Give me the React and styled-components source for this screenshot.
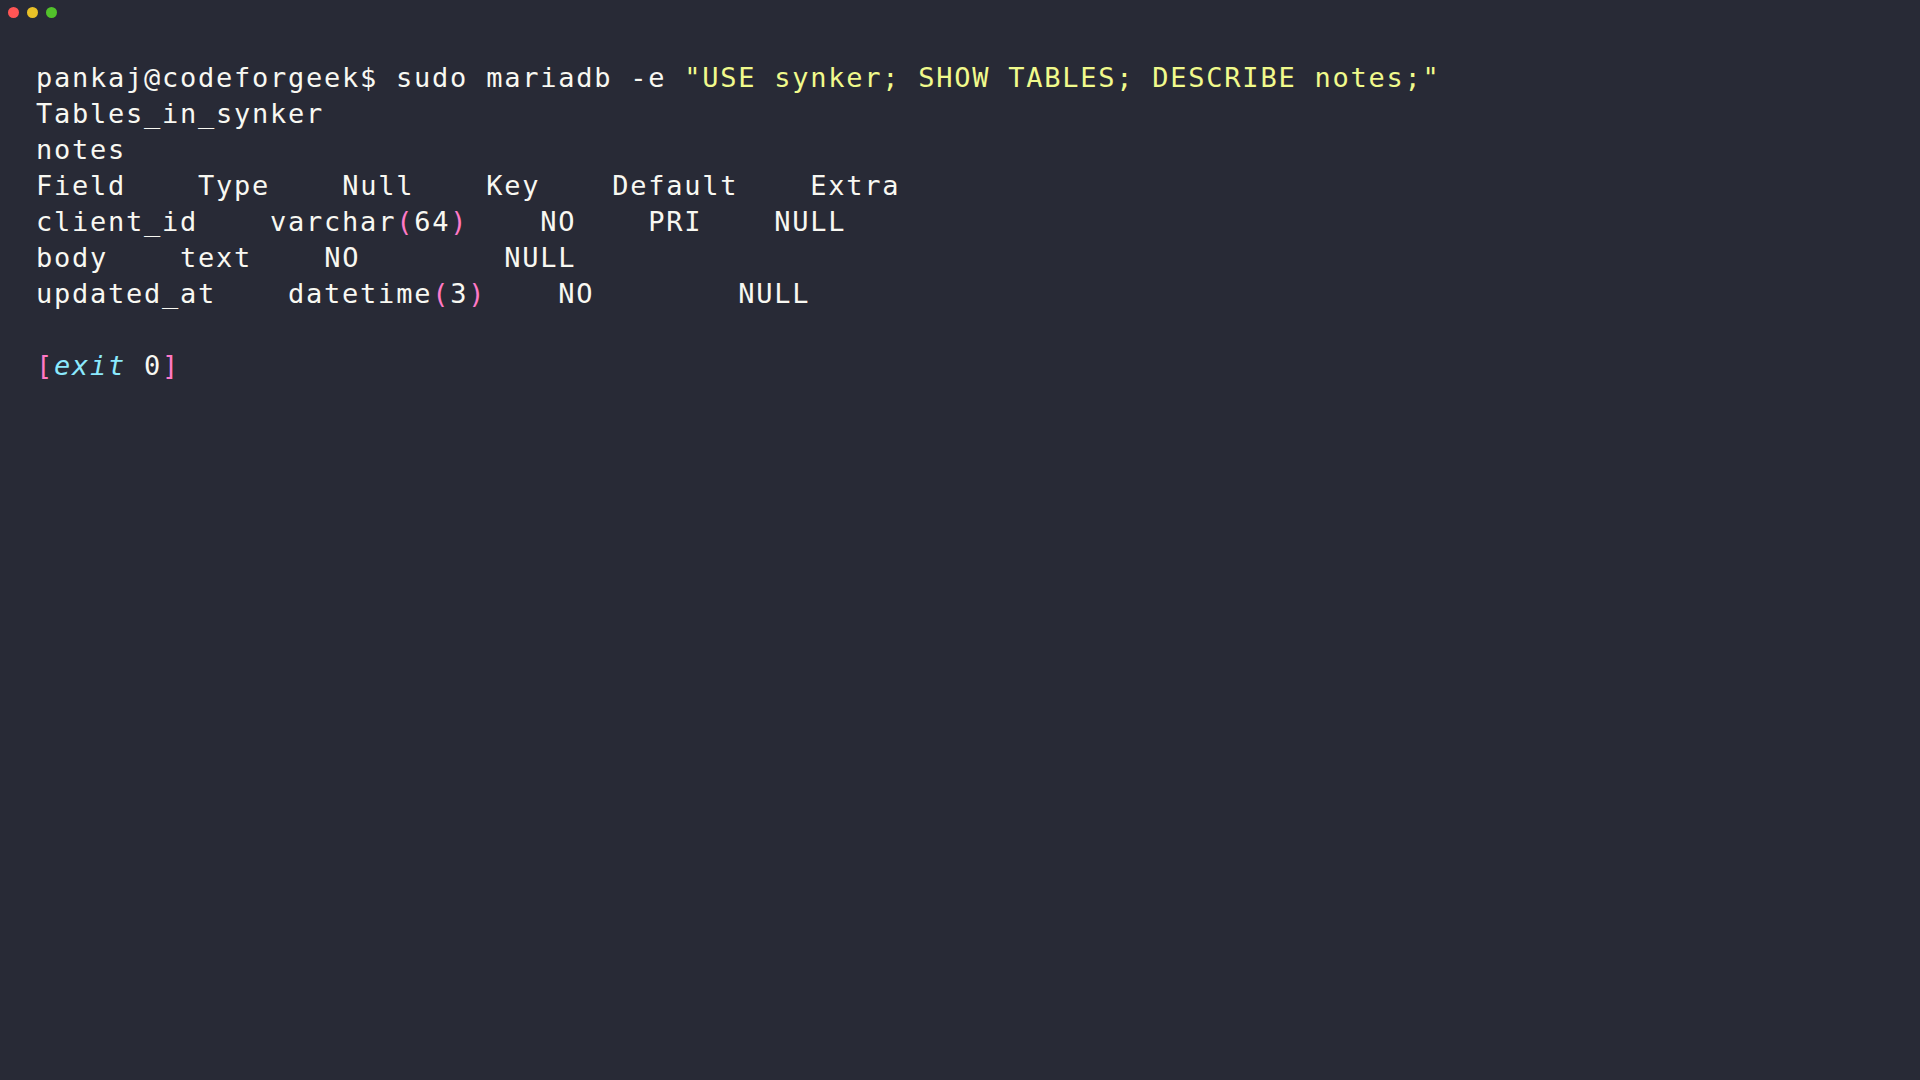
import React from 'react'
import styled, { createGlobalStyle } from 'styled-components'

const GlobalStyle = createGlobalStyle`
  html, body {
    margin: 0;
    padding: 0;
    background: #282a36;
  }
`

const rows = [
  ['Field', 'Type', 'Null', 'Key', 'Default', 'Extra'],
  ['client_id', 'varchar(64)', 'NO', 'PRI', 'NULL'],
  ['body', 'text', 'NO', '', 'NULL'],
  ['updated_at', 'datetime(3)', 'NO', '', 'NULL'],
]

// wrap parens in pink like the shell highlighter does
const paint = (cell) => {
  const m = cell.match(/^(\w+)\((.*)\)$/)
  if (!m) return cell
  return (
    <>
      {m[1]}<Paren>(</Paren>{m[2]}<Paren>)</Paren>
    </>
  )
}

const App = () => {
  return (
    <Window>
      <GlobalStyle />
      <TitleBar>
        <Dot color="#ff5555" />
        <Dot color="#e9c127" />
        <Dot color="#52c22b" />
      </TitleBar>
      <Screen>
        <Line>
          pankaj@codeforgeek$ sudo mariadb -e <Str>"USE synker; SHOW TABLES; DESCRIBE notes;"</Str>
        </Line>
        <Line>Tables_in_synker</Line>
        <Line>notes</Line>
        {rows.map((r, i) => (
          <Line key={i}>
            {r.map((c, j) => (
              <React.Fragment key={j}>
                {j > 0 && '    '}
                {paint(c)}
              </React.Fragment>
            ))}
          </Line>
        ))}
        <Line>{' '}</Line>
        <Line>
          <Paren>[</Paren><Exit>exit</Exit> 0<Paren>]</Paren>
        </Line>
      </Screen>
    </Window>
  )
}
export default App

const Window = styled.div`
  min-height: 100vh;
  background: #282a36;
  color: #f8f8f2;
`

const TitleBar = styled.div`
  height: 24px;
  display: flex;
  align-items: center;
  gap: 8px;
  padding-left: 8px;
`

const Dot = styled.span`
  width: 11px;
  height: 11px;
  border-radius: 50%;
  background: ${(p) => p.color};
`

const Screen = styled.div`
  padding: 36px 0 0 36px;
  font-family: "DejaVu Sans Mono", "Liberation Mono", monospace;
  font-size: 27px;
  letter-spacing: 1.75px;
  line-height: 36px;
`

const Line = styled.div`
  white-space: pre;
  height: 36px;
`

const Str = styled.span`
  color: #f1fa8c;
`

const Paren = styled.span`
  color: #ff79c6;
`

const Exit = styled.span`
  color: #8be9fd;
  font-style: italic;
`
